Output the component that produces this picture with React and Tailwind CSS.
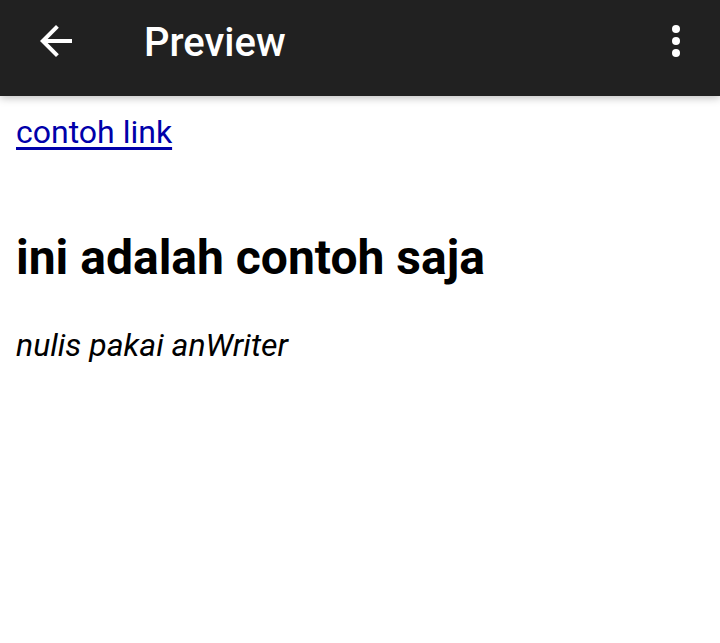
export default function App() {
  return (
    <div className="w-[720px] h-[643px] bg-white overflow-hidden" style={{ fontFamily: "Roboto, 'Noto Sans', sans-serif" }}>
      <div className="relative z-10 h-[96px] bg-[#212121] flex items-start pt-[17px] shadow-[0_2px_8px_rgba(0,0,0,0.25)]">
        <svg className="ml-8 w-12 h-12 shrink-0" viewBox="0 0 24 24" fill="#ffffff">
          <path d="M20 11H7.83l5.59-5.59L12 4l-8 8 8 8 1.41-1.41L7.83 13H20v-2z" />
        </svg>
        <div className="ml-[64px] h-12 pt-1 flex items-center text-white text-[40px] font-medium leading-none">Preview</div>
        <div className="flex-1" />
        <svg className="mr-5 w-12 h-12 shrink-0" viewBox="0 0 24 24" fill="#ffffff">
          <circle cx="12" cy="6" r="2" />
          <circle cx="12" cy="12" r="2" />
          <circle cx="12" cy="18" r="2" />
        </svg>
      </div>
      <div className="px-4 pt-[17px]">
        <a href="#" className="block w-fit text-[32px] leading-[38px] text-[#0000aa] underline underline-offset-[4px]">contoh link</a>
        <h1 className="mt-[78px] text-[48px] leading-[58px] font-bold text-black">ini adalah contoh saja</h1>
        <p className="mt-[39px] text-[32px] leading-[38px] italic text-black">nulis pakai anWriter</p>
      </div>
    </div>
  );
}
